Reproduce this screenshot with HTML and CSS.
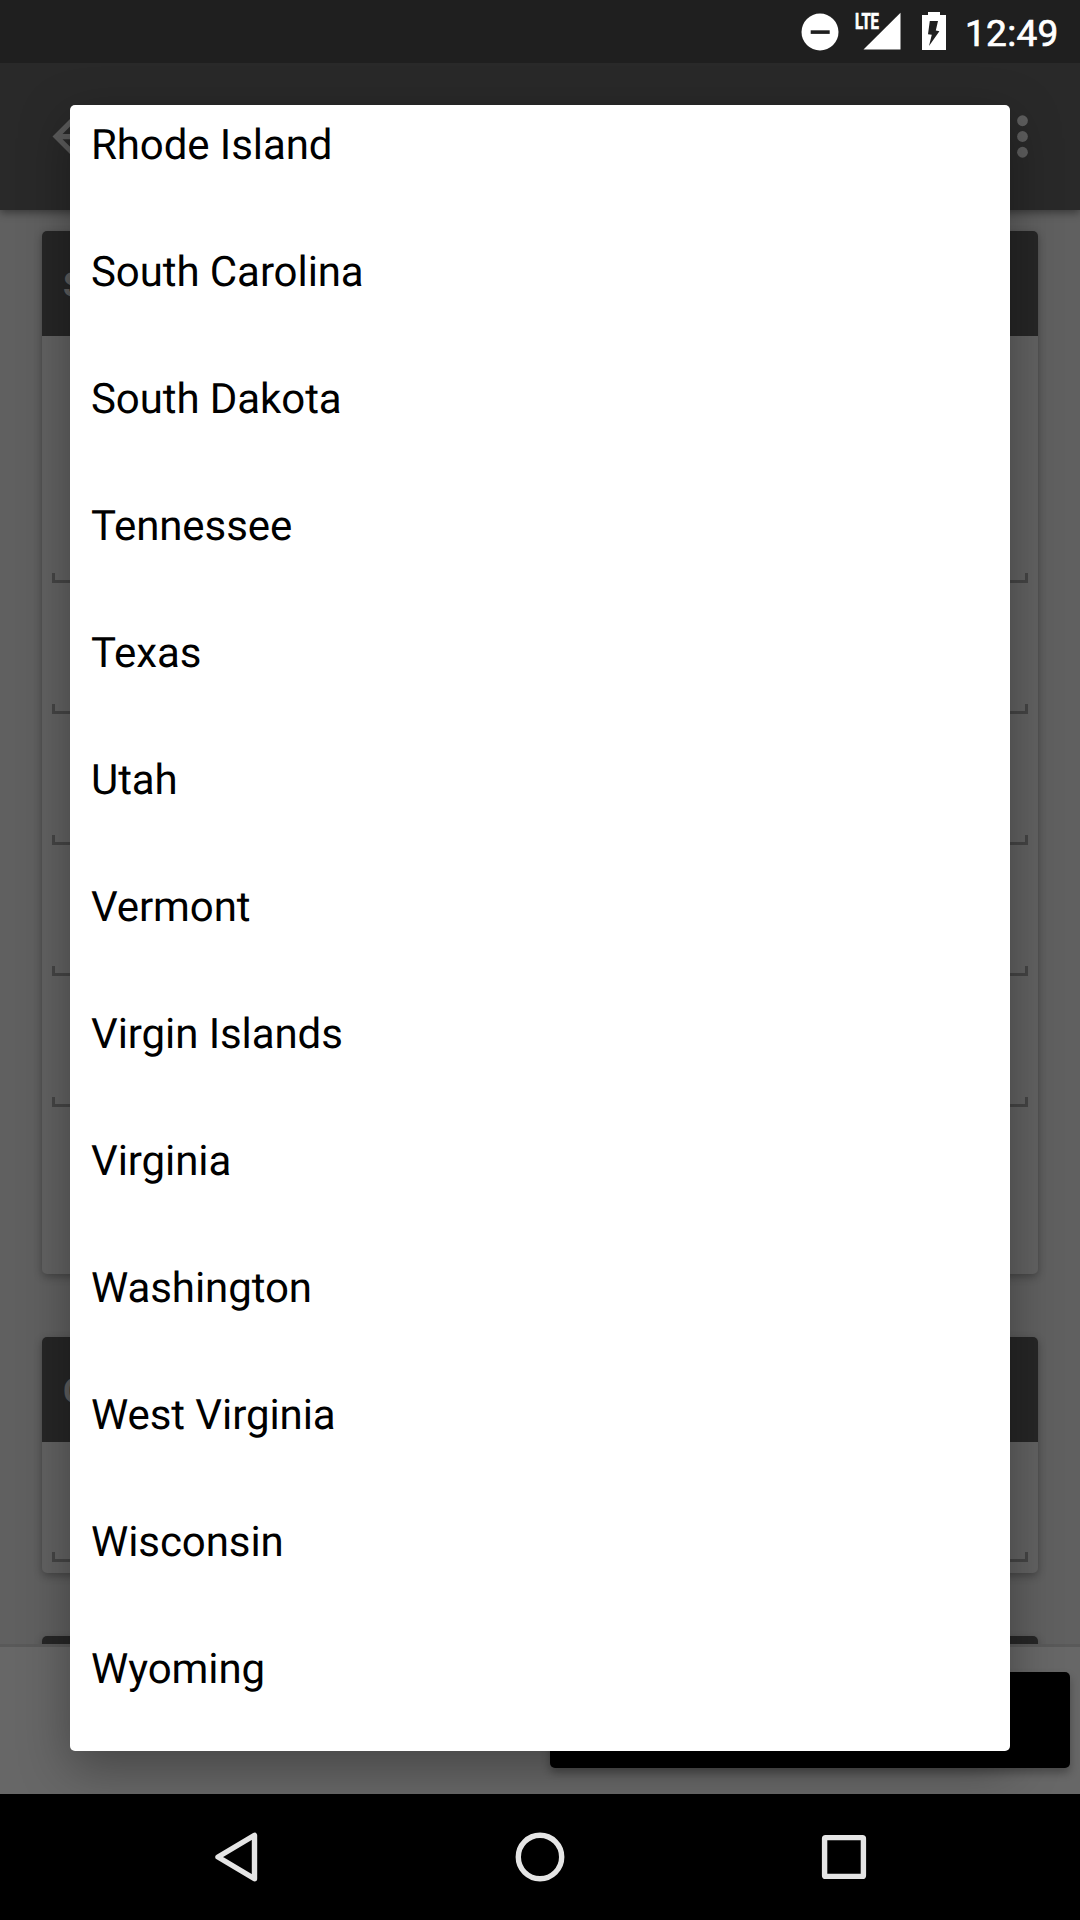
FILE: index.html
```html
<!DOCTYPE html>
<html lang="en">
<head>
<meta charset="utf-8">
<title>Select state</title>
<link rel="stylesheet" href="styles.css">
</head>
<body>
<div class="screen">
  <header class="status">
    <svg class="status-icons" width="110" height="63" viewBox="0 0 110 63" fill="#fff">
      <circle cx="20" cy="32" r="18.5"/>
      <path d="M10.7 30.3h19v3.6h-19z" fill="#1f1f1f"/>
      <text class="lte" x="55" y="29" textLength="24" lengthAdjust="spacingAndGlyphs">LTE</text>
      <path d="M63.5 49.5h37V12.7z"/>
    </svg>
    <svg class="battery" width="24" height="63" viewBox="0 0 24 63">
      <path fill="#fff" d="M0 15h6v-3h12v3h6v35H0z"/>
      <path fill="#1f1f1f" d="M7.8 21H16l-2.2 9.5 3.6.8L7 46l2.8-11.3L6 34.2z"/>
    </svg>
    <span class="clock">12:49</span>
  </header>

  <div class="toolbar">
    <svg width="63" height="63" viewBox="0 0 24 24" fill="#5b5b5b"><path d="M20 11H7.83l5.59-5.59L12 4l-8 8 8 8 1.41-1.41L7.83 13H20v-2z"/></svg>
    <svg width="63" height="63" viewBox="0 0 24 24" fill="#5e5e5e"><circle cx="12" cy="6" r="2.05"/><circle cx="12" cy="12" r="2.05"/><circle cx="12" cy="18" r="2.05"/></svg>
  </div>

  <main class="content">
    <section class="card card-long">
      <h2 class="card-title">S</h2>
      <div class="fields">
        <div class="field"></div>
        <div class="field"></div>
        <div class="field"></div>
        <div class="field"></div>
        <div class="field"></div>
      </div>
    </section>
    <section class="card card-short">
      <h2 class="card-title">C</h2>
      <div class="fields"><div class="field"></div></div>
    </section>
    <section class="card card-next"><h2 class="card-title"></h2></section>
  </main>

  <footer class="actions"><div class="primary"></div></footer>

  <nav class="navbar">
    <svg width="64" height="64" viewBox="0 0 64 64"><path d="M14 32 50.5 10.3v43.4z"/></svg>
    <svg width="64" height="64" viewBox="0 0 64 64"><circle cx="32" cy="32" r="21.7"/></svg>
    <svg width="64" height="64" viewBox="0 0 64 64"><rect x="12.6" y="12.6" width="38.8" height="38.8" rx="1"/></svg>
  </nav>

  <ul class="dialog">
    <li>Rhode Island</li>
    <li>South Carolina</li>
    <li>South Dakota</li>
    <li>Tennessee</li>
    <li>Texas</li>
    <li>Utah</li>
    <li>Vermont</li>
    <li>Virgin Islands</li>
    <li>Virginia</li>
    <li>Washington</li>
    <li>West Virginia</li>
    <li>Wisconsin</li>
    <li>Wyoming</li>
  </ul>
</div>
</body>
</html>
```
FILE: styles.css
```css
* { box-sizing: border-box; }
body { margin: 0; font-family: Roboto, "Liberation Sans", sans-serif; }

.screen {
  position: relative;
  width: 1080px;
  height: 1920px;
  display: flex;
  flex-direction: column;
  overflow: hidden;
  background: #606060;
}

.status {
  position: relative;
  z-index: 2;
  flex: 0 0 63px;
  min-height: 0;
  height: 63px;
  display: flex;
  justify-content: flex-end;
  padding-right: 22px;
  background: #1f1f1f;
  color: #fff;
}
.status-icons { margin-right: 12px; }
.battery { margin-right: 19px; }
.lte {
  font: bold 22px Roboto, sans-serif;
  stroke: #fff;
  stroke-width: .7px;
}
.clock {
  width: 93px;
  height: 63px;
  font-size: 37px;
  font-weight: 400;
  letter-spacing: .3px;
  -webkit-text-stroke: .7px #fff;
  line-height: 67px;
  white-space: nowrap;
}

.toolbar {
  position: relative;
  z-index: 1;
  flex: 0 0 147px;
  display: flex;
  align-items: center;
  justify-content: space-between;
  padding: 0 26px 0 42px;
  background: #292929;
  box-shadow: 0 3px 8px rgba(0, 0, 0, .4);
}

.content {
  flex: 0 0 1434px;
  display: flex;
  flex-direction: column;
  gap: 63px;
  padding: 21px 42px 0;
  overflow: hidden;
}
.card {
  flex-shrink: 0;
  border-radius: 5px;
  background: #626262;
  box-shadow: 0 3px 8px rgba(0, 0, 0, .3);
}
.card-long { height: 1043px; }
.card-short { height: 236px; }
.card-title {
  height: 105px;
  margin: 0;
  padding-left: 21px;
  border-radius: 5px 5px 0 0;
  background: #262626;
  color: #5e5e5e;
  font-size: 35px;
  font-weight: 700;
  line-height: 110px;
}
.fields {
  display: flex;
  flex-direction: column;
  gap: 121px;
  padding: 237px 10px 0;
}
.card-short .fields { padding-top: 110px; }
.field {
  height: 10px;
  border: solid #454545;
  border-width: 0 3px 3px;
}

.actions {
  flex: 0 0 150px;
  display: flex;
  justify-content: flex-end;
  padding: 25px 10px 0;
  border-top: 3px solid #595959;
  background: #676767;
}
.primary {
  width: 520px;
  height: 96px;
  border-radius: 5px;
  background: #000;
  box-shadow: 0 5px 8px rgba(0, 0, 0, .3);
}

.navbar {
  position: relative;
  z-index: 4;
  flex: 0 0 126px;
  display: flex;
  justify-content: space-between;
  align-items: center;
  padding: 0 204px;
  background: #000;
}
.navbar svg {
  fill: none;
  stroke: #e5e5e5;
  stroke-width: 5.4;
  stroke-linejoin: round;
}

/* Popup list laid over the dimmed page */
.dialog {
  position: absolute;
  z-index: 3;
  left: 70px;
  top: 105px;
  width: 940px;
  height: 1646px;
  margin: 0;
  padding: 0 21px;
  list-style: none;
  overflow: hidden;
  border-radius: 5px;
  background: #fff;
  color: #000;
  font-size: 42px;
  letter-spacing: -.08px;
  text-rendering: geometricPrecision;
  box-shadow: 0 16px 50px rgba(0, 0, 0, .34);
}
.dialog li {
  height: 127px;
  line-height: 82px;
}
```
